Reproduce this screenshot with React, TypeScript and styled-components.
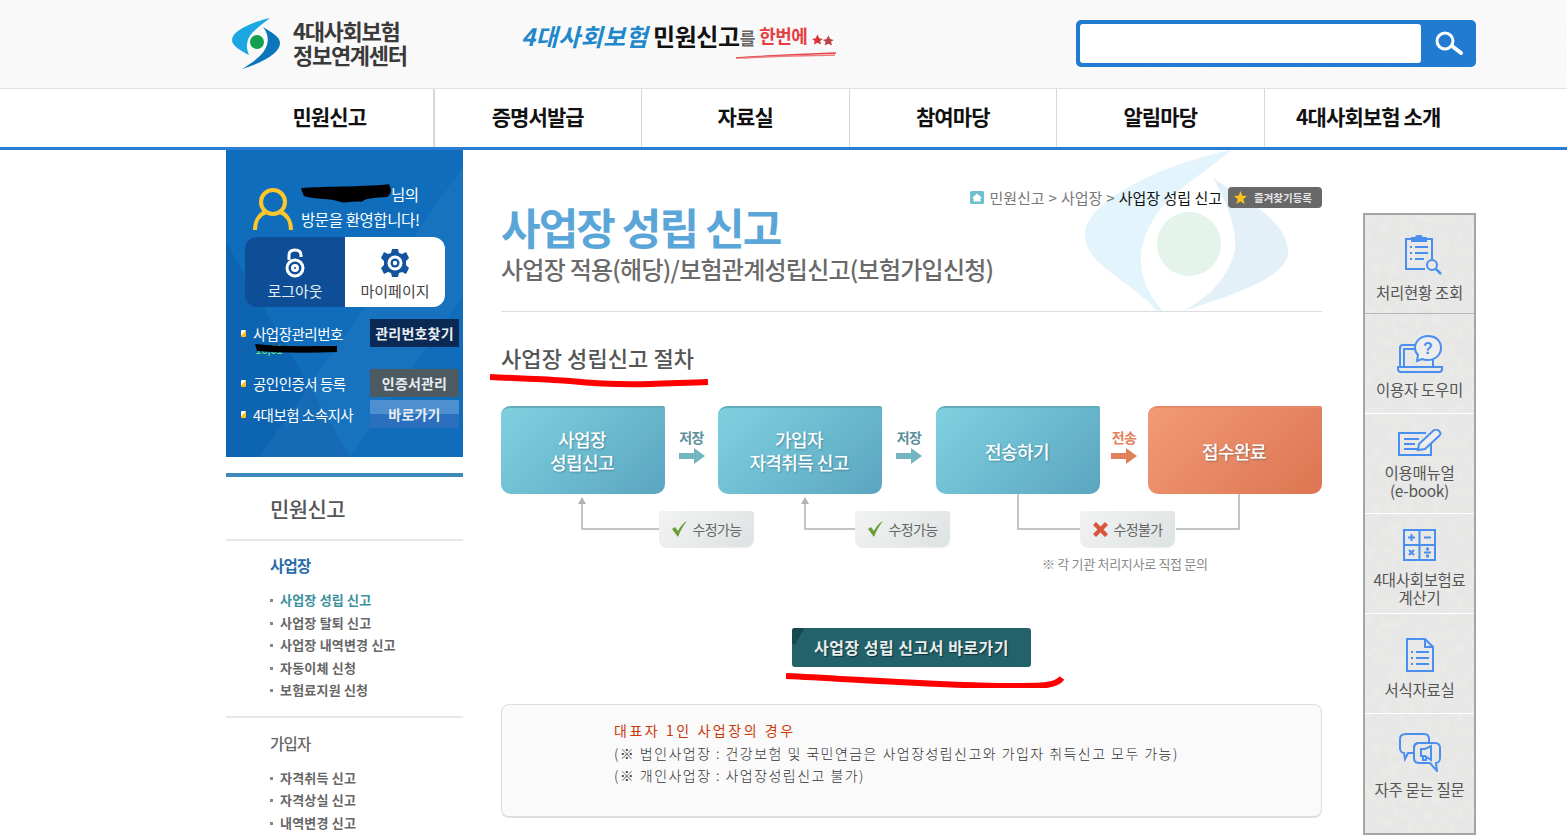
import styled, { createGlobalStyle } from 'styled-components';

const KR = `"Noto Sans CJK KR", "Noto Sans", sans-serif`;
const ICON = '#4a8ef0';

const paper = (freq: number, opacity: number) =>
  `url("data:image/svg+xml,%3Csvg xmlns='http://www.w3.org/2000/svg' width='240' height='240'%3E%3Cfilter id='n'%3E%3CfeTurbulence type='fractalNoise' baseFrequency='${freq}' numOctaves='3'/%3E%3CfeColorMatrix values='0 0 0 0 0.45 0 0 0 0 0.45 0 0 0 0 0.45 0 0 0 ${opacity} 0'/%3E%3C/filter%3E%3Crect width='240' height='240' filter='url(%23n)'/%3E%3C/svg%3E")`;

const GlobalStyle = createGlobalStyle`
  html, body {
    margin: 0;
    padding: 0;
    height: 835px;
    overflow: hidden;
    background: #fff;
    font-family: ${KR};
  }
  * { box-sizing: border-box; }
`;

const NAV_ITEMS = ['민원신고', '증명서발급', '자료실', '참여마당', '알림마당', '4대사회보험 소개'];
const BIZ_LINKS = ['사업장 성립 신고', '사업장 탈퇴 신고', '사업장 내역변경 신고', '자동이체 신청', '보험료지원 신청'];
const MEMBER_LINKS = ['자격취득 신고', '자격상실 신고', '내역변경 신고'];

function Logo() {
  return (
    <svg width="50" height="52" viewBox="0 0 50 52">
      <path d="M39 0C24 3 1 12 1 22C1 28 10 33 18 37C14 28 16 20 22 14C27 9 33 5 39 0Z" fill="#1ba8e2" />
      <path d="M32 9C38 13 49 18 49 25C49 36 28 46 11 51C22 44 32 38 36 27C38 20 36 14 32 9Z" fill="#0b76bb" />
      <circle cx="26" cy="24" r="7" fill="#12a04e" />
    </svg>
  );
}

function Watermark() {
  return (
    <WatermarkSvg width="203" height="161" viewBox="0 0 203 161">
      <path d="M147 0C100 8 0 45 0 85C0 115 45 130 72 161H78C50 130 48 95 75 60C90 40 120 22 147 0Z" fill="#e3f4fc" />
      <path d="M128 28C160 50 203 70 203 103C203 130 130 150 98 161C120 150 143 130 150 100C152 75 140 50 128 28Z" fill="#e3f0f8" />
      <circle cx="104" cy="94" r="32" fill="#e5f4ea" />
    </WatermarkSvg>
  );
}

function Check() {
  return (
    <svg width="17" height="18" viewBox="0 0 17 18">
      <path d="M1 9L4 7L7 11C9 7 12 3 16 1C12 6 9 11 7 17Z" fill="#6a9e35" />
    </svg>
  );
}

function Cross() {
  return (
    <svg width="17" height="17" viewBox="0 0 17 17">
      <path d="M1 4L4 1L8.500 5.500L13 1L16 4L11.500 8.500L16 13L13 16L8.500 11.500L4 16L1 13L5.500 8.500Z" fill="#d9553c" />
    </svg>
  );
}

function ArrowRight({ color }: { color: string }) {
  return (
    <svg width="26" height="16" viewBox="0 0 26 16">
      <path d="M0 5H15V0L26 8L15 16V11H0Z" fill={color} />
    </svg>
  );
}

const tileIcons = {
  clipboard: (
    <svg width="44" height="40" viewBox="-6 0 44 40" fill="none" stroke={ICON} strokeWidth="2">
      <path d="M8 4H2V34H21M22 4H28V24" />
      <path d="M8 6V3H12C12 0 18 0 18 3H22V6Z" fill={ICON} />
      <path d="M6 12H8M11 12H24M6 18H8M11 18H24M6 24H8M11 24H20" />
      <circle cx="28" cy="30" r="5" />
      <path d="M32 34L37 39" strokeWidth="2.500" />
    </svg>
  ),
  laptop: (
    <svg width="46" height="40" viewBox="0 0 46 40" fill="none" stroke={ICON} strokeWidth="2">
      <path d="M3 32V14C3 12 4 11 6 11H22M36 26V32" />
      <path d="M7 32V15H21M1 33H45V35C45 37 44 38 42 38H4C2 38 1 37 1 35Z" />
      <path d="M31 2C38 2 44 6 44 14C44 21 38 26 31 26C29 26 27 26 25 25L20 27L21 21C19 19 18 17 18 14C18 7 24 2 31 2Z" fill="#eee" />
      <text x="31" y="20" fontSize="16" fontWeight="700" fill={ICON} stroke="none" textAnchor="middle" fontFamily="Liberation Sans, sans-serif">?</text>
    </svg>
  ),
  note: (
    <svg width="44" height="28" viewBox="0 0 44 28" fill="none" stroke={ICON} strokeWidth="2">
      <path d="M33 11V26H1V4H28" />
      <path d="M6 10H21M6 15H17M6 20H21" />
      <path d="M20 21L21 15L35 2C37 0 39 0 41 2C43 4 43 5 41 7L27 20Z" fill="#eee" />
    </svg>
  ),
  calc: (
    <svg width="33" height="32" viewBox="0 0 33 32" fill="none" stroke={ICON} strokeWidth="2">
      <rect x="1" y="1" width="31" height="30" />
      <path d="M16.500 1V31M1 16H32" />
      <path d="M5 8.500H12M8.500 5V12M21 8.500H28M6 21L11 26M11 21L6 26M21 23.500H28" />
      <circle cx="24.500" cy="20" r="0.700" fill={ICON} />
      <circle cx="24.500" cy="27" r="0.700" fill={ICON} />
    </svg>
  ),
  doc: (
    <svg width="28" height="34" viewBox="0 0 28 34" fill="none" stroke={ICON} strokeWidth="2">
      <path d="M1 1H19L27 9V33H1Z" />
      <path d="M19 1V9H27" />
      <path d="M5 14H7M10 14H23M5 20H7M10 20H23M5 26H7M10 26H23" />
    </svg>
  ),
  bubbles: (
    <svg width="42" height="39" viewBox="0 0 42 39" fill="none" stroke={ICON} strokeWidth="2">
      <path d="M7 1H25C28 1 30 3 30 6V10H20C17 10 15 12 15 15V20H9L6 26L5 20C3 20 1 18 1 15V6C1 3 3 1 7 1Z" />
      <path d="M20 10H36C39 10 41 12 41 15V25C41 28 39 30 37 30L38 38L31 30H20C17 30 15 28 15 25V15C15 12 17 10 20 10Z" />
      <path d="M22 16V23H26L32 27V13L26 16ZM24 23V27H27V24" />
    </svg>
  ),
};

const TILES = [
  { icon: tileIcons.clipboard, lines: ['처리현황 조회'], top: 20, gap: 8, height: 99, line: '#b5b5b5' },
  { icon: tileIcons.laptop, lines: ['이용자 도우미'], top: 20, gap: 6, height: 100, line: '#fff' },
  { icon: tileIcons.note, lines: ['이용매뉴얼', '(e-book)'], top: 15, gap: 6, height: 100, line: '#fff' },
  { icon: tileIcons.calc, lines: ['4대사회보험료', '계산기'], top: 15, gap: 9, height: 100, line: '#fff' },
  { icon: tileIcons.doc, lines: ['서식자료실'], top: 24, gap: 8, height: 100, line: '#fff' },
  { icon: tileIcons.bubbles, lines: ['자주 묻는 질문'], top: 19, gap: 8, height: 119, line: 'transparent' },
];

function App() {
  return (
    <>
      <GlobalStyle />
      <Header>
        <LogoWrap>
          <Logo />
          <LogoText>
            4대사회보험
            <br />
            정보연계센터
          </LogoText>
        </LogoWrap>
        <Slogan>
          <SloganBlue>4대사회보험</SloganBlue>
          <SloganBlack>민원신고</SloganBlack>
          <SloganSmall>를</SloganSmall>
          <SloganRed>한번에</SloganRed>
          <SloganStars width="24" height="14" viewBox="0 0 24 14">
            <path d="M6 1L8 5L12 6L9 8L10 12L6 10L2 12L3 8L0 6L4 5Z" fill="#d8333a" />
            <path d="M18 2L20 6L24 7L21 9L22 13L18 11L14 13L15 9L12 7L16 6Z" fill="#b8434a" />
          </SloganStars>
          <SloganBrush width="102" height="8" viewBox="0 0 102 8">
            <path d="M1 7C30 5 70 3 101 2" stroke="#e2474d" strokeWidth="1.500" fill="none" />
            <path d="M8 7C40 5 70 5 100 4" stroke="#ee7a7d" strokeWidth="1.500" fill="none" />
          </SloganBrush>
        </Slogan>
        <SearchBox>
          <SearchInput aria-label="검색" />
          <SearchButton aria-label="검색">
            <svg width="30" height="26" viewBox="0 0 30 26" fill="none" stroke="#fff">
              <circle cx="11" cy="11" r="8" strokeWidth="3" />
              <path d="M18 16L27 23" strokeWidth="4" strokeLinecap="round" />
            </svg>
          </SearchButton>
        </SearchBox>
      </Header>

      <Nav>
        {NAV_ITEMS.map((item) => (
          <NavItem key={item}>{item}</NavItem>
        ))}
      </Nav>

      <Main>
        <Sidebar>
          <UserPanel>
            <Welcome>
              <svg width="40" height="44" viewBox="0 0 40 44" fill="none" stroke="#fdc62b" strokeWidth="4">
                <circle cx="20" cy="15" r="12" />
                <path d="M2 43C2 33 7 27 13 25M38 43C38 33 33 27 27 25" />
              </svg>
              <WelcomeText>
                <div>
                  <NameSlot>
                    <NameScribble width="90" height="20" viewBox="0 0 92 20">
                      <path d="M0 4C20 2 60 3 90 0C93 6 92 11 88 13C70 14 65 15 62 18C50 17 45 20 40 18C30 14 15 16 3 12Z" fill="#000" />
                    </NameScribble>
                  </NameSlot>
                  님의
                </div>
                <div>방문을 환영합니다!</div>
              </WelcomeText>
            </Welcome>
            <AccountBox>
              <AccountButton $primary>
                <svg width="22" height="30" viewBox="0 0 22 30" fill="none" stroke="#fff" strokeWidth="3">
                  <path d="M5 12V7C5 3 8 2 11 2C14 2 17 3 17 7V9" />
                  <circle cx="11" cy="20" r="8" />
                  <circle cx="11" cy="20" r="2.500" />
                </svg>
                로그아웃
              </AccountButton>
              <AccountButton>
                <svg width="30" height="30" viewBox="0 0 30 30">
                  <path
                    d="M12 1H18L19 5L22 6L26 4L29 10L26 13V17L29 20L26 26L22 24L19 25L18 29H12L11 25L8 24L4 26L1 20L4 17V13L1 10L4 4L8 6L11 5Z"
                    fill="#14549f"
                  />
                  <circle cx="15" cy="15" r="7.500" fill="#fff" />
                  <circle cx="15" cy="15" r="4.500" fill="#14549f" />
                  <circle cx="15" cy="15" r="2.200" fill="#fff" />
                </svg>
                마이페이지
              </AccountButton>
            </AccountBox>
            <PanelRow $top={12}>
              <PanelLabel>
                <Bullet />
                사업장관리번호
                <BizNumber>10,01</BizNumber>
                <NumberScribble width="82" height="10" viewBox="0 0 82 10">
                  <path d="M0 0C25 3 55 2 82 2V8C55 9 25 9 2 7Z" fill="#000" />
                </NumberScribble>
              </PanelLabel>
              <PanelButton $kind="navy">관리번호찾기</PanelButton>
            </PanelRow>
            <PanelRow $top={22}>
              <PanelLabel>
                <Bullet />
                공인인증서 등록
              </PanelLabel>
              <PanelButton $kind="gray">인증서관리</PanelButton>
            </PanelRow>
            <PanelRow $top={3}>
              <PanelLabel>
                <Bullet />
                4대보험 소속지사
              </PanelLabel>
              <PanelButton $kind="sky">바로가기</PanelButton>
            </PanelRow>
          </UserPanel>

          <SideMenu>
            <SideTitle>민원신고</SideTitle>
            <SideGroup $divider>
              <GroupName $active>사업장</GroupName>
              <LinkList>
                {BIZ_LINKS.map((link, index) => (
                  <LinkItem key={link} $active={index === 0}>
                    {link}
                  </LinkItem>
                ))}
              </LinkList>
            </SideGroup>
            <SideGroup>
              <GroupName>가입자</GroupName>
              <LinkList>
                {MEMBER_LINKS.map((link) => (
                  <LinkItem key={link}>{link}</LinkItem>
                ))}
              </LinkList>
            </SideGroup>
          </SideMenu>
        </Sidebar>

        <Content>
          <Watermark />
          <Breadcrumb>
            <svg width="14" height="13" viewBox="0 0 14 13">
              <rect width="14" height="13" rx="1.500" fill="#6cc0d0" />
              <path d="M7 2.500L12 7H10.500V10.500H3.500V7H2Z" fill="#fff" />
            </svg>
            <span>민원신고</span>
            <CrumbSep>&gt;</CrumbSep>
            <span>사업장</span>
            <CrumbSep>&gt;</CrumbSep>
            <CrumbCurrent>사업장 성립 신고</CrumbCurrent>
            <Bookmark>
              <svg width="13" height="13" viewBox="0 0 14 14">
                <path d="M7 0L9 5L14 5.500L10 9L11.500 14L7 11L2.500 14L4 9L0 5.500L5 5Z" fill="#fcc419" />
              </svg>
              즐겨찾기등록
            </Bookmark>
          </Breadcrumb>
          <PageTitle>사업장 성립 신고</PageTitle>
          <PageSubtitle>사업장 적용(해당)/보험관계성립신고(보험가입신청)</PageSubtitle>

          <SectionHeading>
            사업장 성립신고 절차
            <HeadingStroke width="220" height="20" viewBox="0 0 220 20">
              <path d="M0 6C40 8 60 8 80 10C110 13 130 14 160 13C185 12 200 12 218 11" stroke="#f00" strokeWidth="6" fill="none" />
            </HeadingStroke>
          </SectionHeading>

          <FlowRow>
            <FlowBox $width={164}>
              사업장
              <br />
              성립신고
            </FlowBox>
            <FlowArrow $width={53}>
              저장
              <ArrowRight color="#74b5c2" />
            </FlowArrow>
            <FlowBox $width={164}>
              가입자
              <br />
              자격취득 신고
            </FlowBox>
            <FlowArrow $width={54}>
              저장
              <ArrowRight color="#74b5c2" />
            </FlowArrow>
            <FlowBox $width={164}>전송하기</FlowBox>
            <FlowArrow $width={48} $warm>
              전송
              <ArrowRight color="#e2805c" />
            </FlowArrow>
            <FlowBox $width={174} $warm>
              접수완료
            </FlowBox>
          </FlowRow>

          <ChipRow>
            <Connectors width="821" height="53" viewBox="0 0 821 53" fill="none" stroke="#aeb4b6" strokeWidth="1.500">
              <path d="M81 8V35H158M304 8V35H354M517 0V35H579M675 35H738V0" />
              <path d="M77 10H85L81 3ZM300 10H308L304 3Z" fill="#aeb4b6" stroke="none" />
            </Connectors>
            <Chip $left={158}>
              <Check />
              수정가능
            </Chip>
            <Chip $left={101}>
              <Check />
              수정가능
            </Chip>
            <Chip $left={130}>
              <Cross />
              수정불가
            </Chip>
          </ChipRow>
          <FlowNote>※ 각 기관 처리지사로 직접 문의</FlowNote>

          <ActionRow>
            <ActionButton>사업장 성립 신고서 바로가기</ActionButton>
            <ActionStroke width="280" height="16" viewBox="0 0 280 16">
              <path d="M0 4C64 7 144 13 214 14C254 14 269 15 276 6" stroke="#f00" strokeWidth="6" fill="none" />
            </ActionStroke>
          </ActionRow>

          <NoteBox>
            <NoteTitle>대표자 1인 사업장의 경우</NoteTitle>
            <NoteLine>(※ 법인사업장 : 건강보험 및 국민연금은 사업장성립신고와 가입자 취득신고 모두 가능)</NoteLine>
            <NoteLine>(※ 개인사업장 : 사업장성립신고 불가)</NoteLine>
          </NoteBox>
        </Content>

        <Rail>
          {TILES.map((tile) => (
            <Tile key={tile.lines[0]} $top={tile.top} $height={tile.height} $line={tile.line}>
              {tile.icon}
              <TileLabel $gap={tile.gap}>
                {tile.lines.map((line) => (
                  <div key={line}>{line}</div>
                ))}
              </TileLabel>
            </Tile>
          ))}
        </Rail>
      </Main>
    </>
  );
}

const Header = styled.header`
  height: 88px;
  display: flex;
  align-items: center;
  padding: 0 91px 1px 231px;
  background: #fbfbfb ${paper(0.5, 0.05)};
`;

const LogoWrap = styled.div`
  display: flex;
  align-items: center;
  gap: 12px;
  width: 176px;
`;

const LogoText = styled.div`
  margin-top: -3px;
  font-size: 22px;
  line-height: 24px;
  font-weight: 700;
  letter-spacing: -1.3px;
  color: #3a3a3a;
  white-space: nowrap;
`;

const Slogan = styled.div`
  position: relative;
  display: flex;
  align-items: center;
  width: 313px;
  margin-left: 114px;
  margin-top: -17px;
  white-space: nowrap;
`;

const SloganBlue = styled.span`
  font-size: 24px;
  font-weight: 700;
  font-style: italic;
  letter-spacing: 0.4px;
  color: #1f88cb;
  margin-right: 5px;
`;

const SloganBlack = styled.span`
  font-size: 24px;
  font-weight: 700;
  letter-spacing: -0.4px;
  color: #111;
`;

const SloganSmall = styled.span`
  font-size: 17px;
  font-weight: 700;
  color: #666;
  margin-top: 5px;
  margin-right: 4px;
`;

const SloganRed = styled.span`
  font-size: 18px;
  font-weight: 700;
  letter-spacing: -0.6px;
  color: #e43f45;
  margin-right: 5px;
`;

const SloganStars = styled.svg`
  margin-top: 10px;
`;

const SloganBrush = styled.svg`
  position: absolute;
  right: -3px;
  bottom: -6px;
`;

const SearchBox = styled.form`
  display: flex;
  width: 400px;
  height: 47px;
  margin-left: auto;
  padding: 4px 0 4px 4px;
  border-radius: 5px;
  background: #217bd1;
`;

const SearchInput = styled.input`
  width: 341px;
  height: 39px;
  border: 0;
  border-radius: 3px;
  background: #fff;
`;

const SearchButton = styled.button`
  flex: 1;
  border: 0;
  padding: 2px 0 0;
  background: none;
`;

const Nav = styled.nav`
  height: 62px;
  display: flex;
  padding-left: 226px;
  background: #fff;
  border-top: 1px solid #e2e2e2;
  border-bottom: 3px solid #2a7dd2;
`;

const NavItem = styled.div`
  width: 207.5px;
  display: flex;
  align-items: center;
  justify-content: center;
  padding-bottom: 4px;
  font-size: 21px;
  font-weight: 700;
  letter-spacing: -0.9px;
  color: #111;
  border-right: 1px solid #d8d8d8;
  &:first-child {
    width: 208.5px;
    border-right-width: 2px;
  }
  &:last-child {
    border-right: 0;
  }
`;

const Main = styled.main`
  display: flex;
  align-items: flex-start;
  padding-left: 226px;
`;

const Sidebar = styled.aside`
  width: 237px;
`;

const UserPanel = styled.section`
  height: 307px;
  padding: 33px 0 0 15px;
  color: #fff;
  background:
    linear-gradient(125deg, transparent 55%, rgba(255, 255, 255, 0.04) 55%, rgba(255, 255, 255, 0.04) 75%, transparent 75%),
    linear-gradient(60deg, rgba(0, 40, 110, 0.12) 0, rgba(0, 40, 110, 0.12) 30%, transparent 30%),
    #0f6dbb;
`;

const Welcome = styled.div`
  display: flex;
  align-items: flex-end;
  gap: 8px;
  height: 48px;
  margin-left: 12px;
`;

const WelcomeText = styled.div`
  margin-bottom: -1px;
  font-size: 15.5px;
  line-height: 25px;
  letter-spacing: -0.4px;
  white-space: nowrap;
`;

const NameSlot = styled.span`
  position: relative;
  display: inline-block;
  width: 90px;
  height: 15px;
`;

const NameScribble = styled.svg`
  position: absolute;
  left: 0;
  top: -2px;
`;

const AccountBox = styled.div`
  display: flex;
  width: 200px;
  height: 70px;
  margin: 6px 0 0 4px;
  border-radius: 12px;
  overflow: hidden;
`;

const AccountButton = styled.div<{ $primary?: boolean }>`
  flex: 1;
  display: flex;
  flex-direction: column;
  align-items: center;
  justify-content: flex-end;
  gap: 2px;
  padding-bottom: 5px;
  font-size: 15px;
  line-height: 22px;
  letter-spacing: 0;
  color: ${(props) => (props.$primary ? '#e8eef6' : '#444')};
  background: ${(props) => (props.$primary ? '#0e4e97' : '#fff')};
`;

const PanelRow = styled.div<{ $top: number }>`
  display: flex;
  align-items: center;
  justify-content: space-between;
  width: 218px;
  margin-top: ${(props) => props.$top}px;
`;

const PanelLabel = styled.div`
  position: relative;
  display: flex;
  align-items: center;
  gap: 7px;
  font-size: 14.5px;
  letter-spacing: -0.5px;
  white-space: nowrap;
`;

const Bullet = styled.i`
  width: 5px;
  height: 7px;
  border-radius: 1px;
  background: linear-gradient(135deg, #fff 45%, #fcc419 45%);
`;

const BizNumber = styled.span`
  position: absolute;
  left: 14px;
  top: 20px;
  font-size: 12px;
  line-height: 12px;
  color: #6fe07a;
`;

const NumberScribble = styled.svg`
  position: absolute;
  left: 14px;
  top: 21px;
`;

const PANEL_BUTTONS = {
  navy: '#0a2a55',
  gray: '#4e5a62',
  sky: 'linear-gradient(#4e8fcf 50%, #2a70bf 50%)',
};

const PanelButton = styled.div<{ $kind: keyof typeof PANEL_BUTTONS }>`
  width: 89px;
  height: 28px;
  display: flex;
  align-items: center;
  justify-content: center;
  padding-bottom: 1px;
  font-size: 14px;
  font-weight: 700;
  letter-spacing: 0.2px;
  color: #e9edf1;
  background: ${(props) => PANEL_BUTTONS[props.$kind]};
`;

const SideMenu = styled.nav`
  margin-top: 16px;
  border-top: 4px solid #3f8abb;
`;

const SideTitle = styled.h2`
  height: 64px;
  margin: 0;
  padding: 0 0 0 44px;
  line-height: 62px;
  font-size: 21px;
  font-weight: 500;
  letter-spacing: -0.6px;
  color: #555;
  border-bottom: 2px solid #e8e8e8;
`;

const SideGroup = styled.div<{ $divider?: boolean }>`
  padding: ${(props) => (props.$divider ? 14 : 15)}px 0 14px 44px;
  border-bottom: ${(props) => (props.$divider ? '2px solid #e8e8e8' : '0')};
`;

const GroupName = styled.div<{ $active?: boolean }>`
  font-size: 15.5px;
  line-height: 20px;
  font-weight: ${(props) => (props.$active ? 700 : 500)};
  letter-spacing: -0.8px;
  color: ${(props) => (props.$active ? '#2a6ca8' : '#666')};
`;

const LinkList = styled.ul`
  margin: 14px 0 0;
  padding: 0;
  list-style: none;
`;

const LinkItem = styled.li<{ $active?: boolean }>`
  position: relative;
  padding-left: 10px;
  font-size: 13px;
  line-height: 22.5px;
  font-weight: 700;
  letter-spacing: 0.2px;
  color: ${(props) => (props.$active ? '#3a8f9c' : '#666')};
  white-space: nowrap;
  &::before {
    content: '';
    position: absolute;
    left: 0;
    top: 10px;
    width: 3px;
    height: 3px;
    background: #888;
  }
`;

const Content = styled.section`
  position: relative;
  isolation: isolate;
  width: 821px;
  margin-left: 38px;
`;

const WatermarkSvg = styled.svg`
  position: absolute;
  left: 584px;
  top: 0;
  z-index: -1;
`;

const Breadcrumb = styled.div`
  display: flex;
  align-items: center;
  justify-content: flex-end;
  height: 20px;
  margin-top: 37px;
  font-size: 15px;
  letter-spacing: 0;
  color: #777;
  white-space: nowrap;
  svg:first-child {
    margin-right: 5px;
  }
`;

const CrumbSep = styled.span`
  margin: 0 4px;
`;

const CrumbCurrent = styled.span`
  color: #111;
`;

const Bookmark = styled.span`
  display: flex;
  align-items: center;
  gap: 2px;
  width: 94px;
  height: 21px;
  margin-left: 6px;
  padding-left: 6px;
  border-radius: 4px;
  font-size: 10.5px;
  font-weight: 700;
  letter-spacing: 0;
  color: #e6e6e6;
  background: #686868;
`;

const PageTitle = styled.h1`
  margin: -3px 0 0;
  font-size: 43px;
  line-height: 44px;
  font-weight: 700;
  letter-spacing: -1.9px;
  color: #5aa6d8;
  white-space: nowrap;
`;

const PageSubtitle = styled.div`
  margin-top: 6px;
  padding-bottom: 27px;
  font-size: 24px;
  line-height: 30px;
  font-weight: 500;
  letter-spacing: -0.75px;
  color: #6a6a6a;
  border-bottom: 1px solid #ddd;
  white-space: nowrap;
`;

const SectionHeading = styled.h3`
  position: relative;
  height: 30px;
  margin: 30px 0 0;
  font-size: 22px;
  line-height: 30px;
  font-weight: 500;
  letter-spacing: 0.1px;
  color: #555;
`;

const HeadingStroke = styled.svg`
  position: absolute;
  left: -11px;
  top: 29px;
`;

const FlowRow = styled.div`
  display: flex;
  margin-top: 34px;
`;

const FlowBox = styled.div<{ $width: number; $warm?: boolean }>`
  width: ${(props) => props.$width}px;
  height: 88px;
  display: flex;
  align-items: center;
  justify-content: center;
  padding-right: 2px;
  text-align: center;
  font-size: 18px;
  line-height: 23px;
  font-weight: 500;
  letter-spacing: -0.6px;
  color: #fff;
  text-shadow: 1px 1px 2px rgba(0, 60, 80, 0.35);
  border-radius: 9px 2px 10px 10px;
  border-top: 2px solid ${(props) => (props.$warm ? '#e78a68' : '#62aebf')};
  background: ${(props) =>
    props.$warm
      ? 'linear-gradient(135deg, #f29a76, #dc7552)'
      : 'linear-gradient(135deg, #7fd1df, #5aa5c1)'};
`;

const FlowArrow = styled.div<{ $width: number; $warm?: boolean }>`
  width: ${(props) => props.$width}px;
  display: flex;
  flex-direction: column;
  align-items: center;
  padding-top: 22px;
  gap: 2px;
  font-size: 14px;
  line-height: 18px;
  font-weight: 700;
  letter-spacing: -0.6px;
  color: ${(props) => (props.$warm ? '#e2805c' : '#5d8f9b')};
`;

const ChipRow = styled.div`
  position: relative;
  display: flex;
  height: 36px;
  margin-top: 17px;
`;

const Connectors = styled.svg`
  position: absolute;
  left: 0;
  top: -17px;
`;

const Chip = styled.div<{ $left: number }>`
  position: relative;
  width: 95px;
  display: flex;
  align-items: center;
  justify-content: center;
  gap: 4px;
  margin-left: ${(props) => props.$left}px;
  border-radius: 3px 3px 8px 8px;
  font-size: 14px;
  letter-spacing: -0.6px;
  color: #666;
  background: linear-gradient(135deg, #f2f4f3, #dde2e2);
  box-shadow: 0 1px 1px rgba(0, 0, 0, 0.08);
`;

const FlowNote = styled.div`
  height: 18px;
  margin: 8px 0 0 541px;
  font-size: 13px;
  line-height: 18px;
  letter-spacing: -0.3px;
  color: #8a8a8a;
  white-space: nowrap;
`;

const ActionRow = styled.div`
  position: relative;
  margin-top: 55px;
  padding-left: 291px;
`;

const ActionButton = styled.div`
  position: relative;
  overflow: hidden;
  width: 239px;
  height: 39px;
  display: flex;
  align-items: center;
  justify-content: center;
  padding-bottom: 2px;
  border-radius: 3px;
  font-size: 16px;
  font-weight: 700;
  letter-spacing: 0.5px;
  color: #e8eeee;
  text-shadow: 1px 1px 1px rgba(0, 0, 0, 0.5);
  background: #23626b;
  &::before {
    content: '';
    position: absolute;
    left: 0;
    top: 0;
    width: 16px;
    height: 16px;
    background: linear-gradient(120deg, #17484f 50%, transparent 50%);
  }
`;

const ActionStroke = styled.svg`
  position: absolute;
  left: 285px;
  top: 44px;
`;

const NoteBox = styled.div`
  height: 114px;
  margin-top: 37px;
  padding: 14px 0 0 112px;
  border: 1px solid #dedede;
  border-width: 1px 1px 2px;
  border-radius: 8px;
  background: #fafafa;
`;

const NoteTitle = styled.div`
  font-size: 14px;
  line-height: 22.5px;
  letter-spacing: 2.55px;
  color: #c9390a;
`;

const NoteLine = styled.div`
  font-size: 14px;
  line-height: 22.5px;
  font-weight: 300;
  letter-spacing: 1.45px;
  color: #333;
  white-space: nowrap;
`;

const Rail = styled.aside`
  width: 113px;
  height: 622px;
  margin: 63px 0 0 41px;
  border: 2px solid #a5a5a5;
  background: #ececeb ${paper(0.12, 0.14)};
`;

const Tile = styled.div<{ $top: number; $height: number; $line: string }>`
  height: ${(props) => props.$height}px;
  display: flex;
  flex-direction: column;
  align-items: center;
  padding-top: ${(props) => props.$top}px;
  border-bottom: 1px solid ${(props) => props.$line};
  svg {
    flex: none;
  }
`;

const TileLabel = styled.div<{ $gap: number }>`
  margin-top: ${(props) => props.$gap}px;
  text-align: center;
  font-size: 15.5px;
  line-height: 18px;
  letter-spacing: -0.3px;
  color: #555;
  white-space: nowrap;
`;

export default App;
